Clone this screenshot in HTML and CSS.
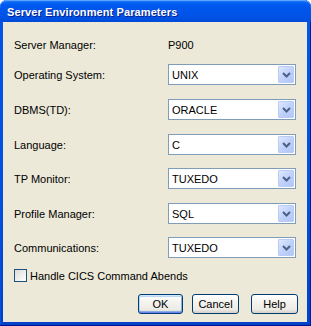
FILE: index.html
```html
<!DOCTYPE html>
<html>
<head>
<meta charset="utf-8">
<link rel="stylesheet" href="styles.css">
</head>
<body>
<div class="window">
  <div class="titlebar"><span class="title">Server Environment Parameters</span></div>
  <div class="content">
    <div class="row first"><span class="label">Server Manager:</span><span class="value">P900</span></div>
    <div class="row"><span class="label">Operating System:</span><div class="combo"><span class="ctext">UNIX</span><span class="cbtn"><svg width="9" height="6" viewBox="0 0 9 6"><path d="M1 1 L4.5 4.5 L8 1" fill="none" stroke="#4d6185" stroke-width="2"/></svg></span></div></div>
    <div class="row"><span class="label">DBMS(TD):</span><div class="combo"><span class="ctext">ORACLE</span><span class="cbtn"><svg width="9" height="6" viewBox="0 0 9 6"><path d="M1 1 L4.5 4.5 L8 1" fill="none" stroke="#4d6185" stroke-width="2"/></svg></span></div></div>
    <div class="row"><span class="label">Language:</span><div class="combo"><span class="ctext">C</span><span class="cbtn"><svg width="9" height="6" viewBox="0 0 9 6"><path d="M1 1 L4.5 4.5 L8 1" fill="none" stroke="#4d6185" stroke-width="2"/></svg></span></div></div>
    <div class="row tight"><span class="label">TP Monitor:</span><div class="combo"><span class="ctext">TUXEDO</span><span class="cbtn"><svg width="9" height="6" viewBox="0 0 9 6"><path d="M1 1 L4.5 4.5 L8 1" fill="none" stroke="#4d6185" stroke-width="2"/></svg></span></div></div>
    <div class="row"><span class="label">Profile Manager:</span><div class="combo"><span class="ctext">SQL</span><span class="cbtn"><svg width="9" height="6" viewBox="0 0 9 6"><path d="M1 1 L4.5 4.5 L8 1" fill="none" stroke="#4d6185" stroke-width="2"/></svg></span></div></div>
    <div class="row tight"><span class="label">Communications:</span><div class="combo"><span class="ctext">TUXEDO</span><span class="cbtn"><svg width="9" height="6" viewBox="0 0 9 6"><path d="M1 1 L4.5 4.5 L8 1" fill="none" stroke="#4d6185" stroke-width="2"/></svg></span></div></div>
    <div class="check"><span class="box"></span><span>Handle CICS Command Abends</span></div>
    <div class="buttons">
      <button class="btn default ok">OK</button>
      <button class="btn cancel">Cancel</button>
      <button class="btn help">Help</button>
    </div>
  </div>
</div>
</body>
</html>
```
FILE: styles.css
```css
html, body {
  margin: 0;
  padding: 0;
  background: #ffffff;
}
.window {
  width: 311px;
  height: 326px;
  box-sizing: border-box;
  display: flex;
  flex-direction: column;
  background: linear-gradient(#0058ee, #0050e0 60%, #0041c8);
  border-radius: 7px 7px 0 0;
  padding: 0 4px 4px 3px;
  box-shadow: inset 0 -1px 0 #00138c, inset -1px 0 0 #001ea0, inset 1px 0 0 #0a4ee0;
  font-family: "Liberation Sans", Arial, sans-serif;
  font-size: 11px;
  color: #000;
}
.titlebar {
  height: 22px;
  margin: 0 -4px 0 -3px;
  border-radius: 7px 7px 0 0;
  background: linear-gradient(#3d95ff 0, #0a66f5 2px, #0058ee 5px, #0055ea 12px, #0052e4 18px, #004ad8 22px);
  display: flex;
  align-items: center;
  padding-left: 7px;
  box-shadow: inset 0 1px 0 #5aa6ff;
}
.title {
  color: #fff;
  font-weight: bold;
  font-size: 11px;
  letter-spacing: 0.1px;
  text-shadow: 1px 1px 0 #0a1b8c;
  padding-top: 1px;
}
.content {
  flex: 1;
  background: #ece9d8;
  padding: 12px 0 0 11px;
  display: flex;
  flex-direction: column;
}
.row {
  height: 21px;
  display: flex;
  align-items: center;
  margin-top: 14px;
}
.row.tight {
  margin-top: 13px;
}
.row.first {
  margin-top: 0;
  margin-bottom: -5px;
}
.label {
  width: 154px;
  flex: none;
}
.combo {
  width: 128px;
  height: 21px;
  box-sizing: border-box;
  border: 1px solid #7f9db9;
  background: #fff;
  display: flex;
  align-items: center;
  padding: 1px;
}
.ctext {
  flex: 1;
  padding-left: 2px;
}
.cbtn {
  width: 16px;
  height: 17px;
  box-sizing: border-box;
  border: 1px solid #bccbf6;
  border-radius: 1px;
  background: linear-gradient(135deg, #dfe8fe, #c0d2fb 50%, #b2c6f6);
  display: flex;
  align-items: center;
  justify-content: center;
}
.check {
  display: flex;
  align-items: center;
  gap: 3px;
  margin-top: 11px;
  height: 13px;
}
.box {
  width: 13px;
  height: 13px;
  box-sizing: border-box;
  border: 1px solid #1c5180;
  background: linear-gradient(135deg, #dcdcd7, #ffffff);
}
.buttons {
  display: flex;
  justify-content: flex-end;
  padding-right: 9px;
  margin-top: 12px;
}
.btn {
  height: 20px;
  box-sizing: border-box;
  border: 1px solid #003c74;
  border-radius: 3px;
  background: linear-gradient(#ffffff, #f4f3ee 40%, #ecebe6 80%, #d6d0c5);
  font-family: "Liberation Sans", Arial, sans-serif;
  font-size: 11px;
  color: #000;
  padding: 0;
}
.ok { width: 45px; }
.cancel { width: 47px; margin-left: 9px; }
.help { width: 47px; margin-left: 12px; }
.btn.default {
  box-shadow: inset 0 1px 0 #cee7ff, inset 0 -1px 0 #6982ee, inset 1px 0 0 #bcd4f6, inset -1px 0 0 #89ade4, inset 0 2px 0 #bcd4f6, inset 0 -2px 0 #89ade4;
}
```
